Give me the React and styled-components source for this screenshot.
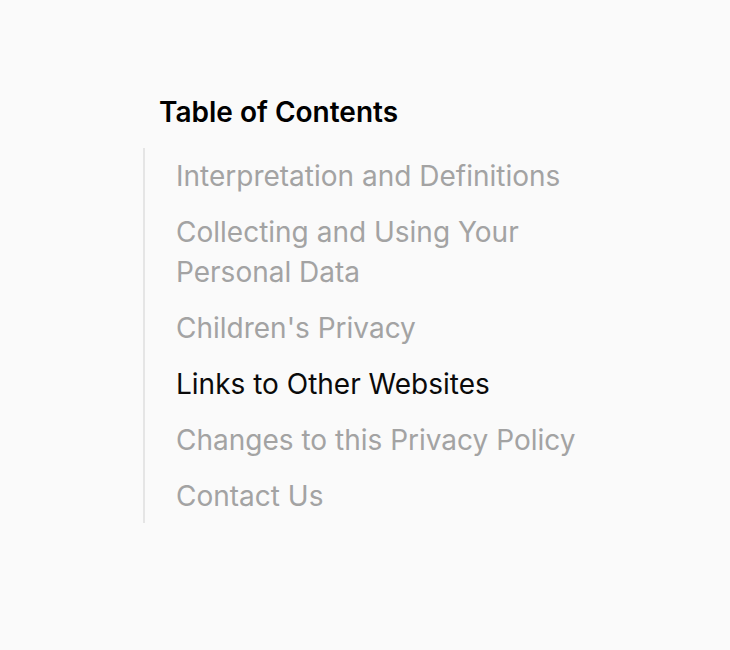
import React from "react";
import styled, { createGlobalStyle } from "styled-components";

const GlobalStyle = createGlobalStyle`
  html, body {
    margin: 0;
    padding: 0;
    background: #fafafa;
  }
  body {
    font-family: Inter, "Noto Sans", sans-serif;
  }
`;

const Page = styled.div`
  min-height: 650px;
  padding: 96px 0 0 143px;
  box-sizing: border-box;
`;

const Nav = styled.nav`
  width: 448px;
  display: flex;
  flex-direction: column;
  gap: 20px;
`;

const Title = styled.h2`
  margin: 0 0 0 16px;
  font-size: 28px;
  line-height: 32px;
  font-weight: 600;
  color: #000;
`;

const List = styled.ul`
  list-style: none;
  margin: 0;
  padding: 8px 0 7px 31px;
  border-left: 2px solid #e5e5e5;
  display: flex;
  flex-direction: column;
  gap: 16px;
`;

const Item = styled.li`
  font-size: 28px;
  line-height: 40px;
  color: ${(p) => (p.$active ? "#0a0a0a" : "#a3a3a3")};
  cursor: pointer;
`;

const items = [
  "Interpretation and Definitions",
  "Collecting and Using Your Personal Data",
  "Children's Privacy",
  "Links to Other Websites",
  "Changes to this Privacy Policy",
  "Contact Us",
];

export default function App() {
  return (
    <>
      <GlobalStyle />
      <Page>
        <Nav>
          <Title>Table of Contents</Title>
          <List>
            {items.map((x) => (
              <Item key={x} $active={x === "Links to Other Websites"}>
                {x}
              </Item>
            ))}
          </List>
        </Nav>
      </Page>
    </>
  );
}
